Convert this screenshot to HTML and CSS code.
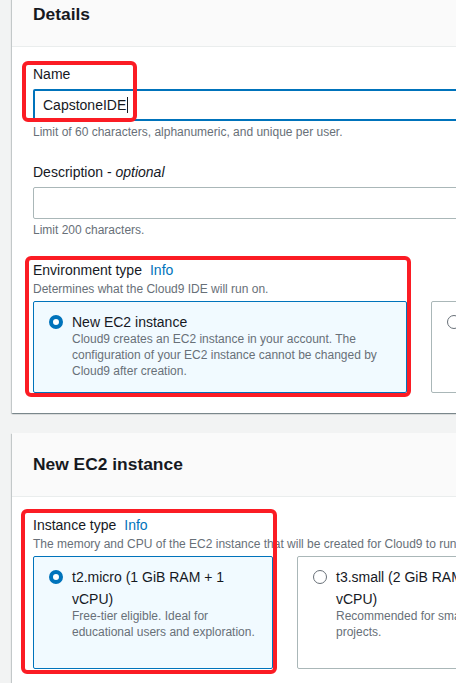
FILE: index.html
```html
<!DOCTYPE html>
<html lang="en">
<head>
<meta charset="utf-8">
<title>Create environment</title>
<link rel="stylesheet" href="styles.css">
</head>
<body>
<div class="page">
  <section class="card card-first">
    <header class="card-header"><h2>Details</h2></header>
    <div class="card-body">
      <div class="field">
        <label class="label">Name</label>
        <div class="input input-focus">CapstoneIDE<span class="caret"></span></div>
        <div class="constraint">Limit of 60 characters, alphanumeric, and unique per user.</div>
        <div class="annot annot-name"></div>
      </div>
      <div class="field">
        <label class="label">Description - <i>optional</i></label>
        <div class="input"></div>
        <div class="constraint">Limit 200 characters.</div>
      </div>
      <div class="field">
        <div class="label">Environment type<a class="info">Info</a></div>
        <div class="field-desc">Determines what the Cloud9 IDE will run on.</div>
        <div class="tiles tiles-env">
          <div class="tile tile-on">
            <span class="radio radio-on"></span>
            <div class="tile-text">
              <div class="tile-title">New EC2 instance</div>
              <div class="tile-desc">Cloud9 creates an EC2 instance in your account. The configuration of your EC2 instance cannot be changed by Cloud9 after creation.</div>
            </div>
          </div>
          <div class="tile">
            <span class="radio"></span>
            <div class="tile-text">
              <div class="tile-title">Existing compute</div>
              <div class="tile-desc">You have an existing instance or server that you'd like to use.</div>
            </div>
          </div>
        </div>
        <div class="annot annot-env"></div>
      </div>
    </div>
  </section>

  <section class="card">
    <header class="card-header"><h2>New EC2 instance</h2></header>
    <div class="card-body card-body-2">
      <div class="field field-first">
        <div class="label">Instance type<a class="info">Info</a></div>
        <div class="field-desc">The memory and CPU of the EC2 instance that will be created for Cloud9 to run on.</div>
        <div class="tiles tiles-inst">
          <div class="tile tile-on">
            <span class="radio radio-on"></span>
            <div class="tile-text">
              <div class="tile-title">t2.micro (1 GiB RAM + 1 vCPU)</div>
              <div class="tile-desc">Free-tier eligible. Ideal for educational users and exploration.</div>
            </div>
          </div>
          <div class="tile">
            <span class="radio"></span>
            <div class="tile-text">
              <div class="tile-title">t3.small (2 GiB RAM + 2 vCPU)</div>
              <div class="tile-desc">Recommended for small web projects.</div>
            </div>
          </div>
        </div>
        <div class="annot annot-inst"></div>
      </div>
    </div>
  </section>
</div>
</body>
</html>
```
FILE: styles.css
```css
html, body {
  overflow: hidden;
}
body {
  margin: 0;
  background: #f2f3f3;
  font-family: "Liberation Sans", Arial, sans-serif;
  color: #16191f;
}
.page {
  padding-left: 12px;
  width: 1000px;
}
.card {
  background: #fff;
  box-shadow: 0 1px 1px 0 rgba(0, 28, 36, .3), 1px 1px 1px 0 rgba(0, 28, 36, .15), -1px 1px 1px 0 rgba(0, 28, 36, .15);
}
.card-first {
  margin-top: -17px;
}
.card + .card {
  margin-top: 20px;
}
.card-header {
  background: #fafafa;
  padding: 20px 21px 21px;
  border-bottom: 1px solid #eaeded;
}
.card-header h2 {
  margin: 0;
  font-size: 17.4px;
  line-height: 22px;
  font-weight: bold;
}
.card-body {
  padding: 16px 21px 20px;
}
.card-body-2 {
  padding-top: 17px;
}
.field {
  position: relative;
  margin-top: 21px;
}
.field:first-child {
  margin-top: 0;
}
.label {
  display: block;
  font-size: 14px;
  line-height: 22px;
  margin-bottom: 4px;
}
.field-desc + .tiles {
  margin-top: 4px;
}
.label + .field-desc {
  margin-top: -4px;
}
.info {
  color: #0073bb;
  margin-left: 8px;
}
.input {
  box-sizing: border-box;
  width: 800px;
  height: 32px;
  border: 1px solid #aab7b8;
  border-radius: 2px;
  padding: 0 9px;
  font-size: 14px;
  line-height: 30px;
  display: flex;
  align-items: center;
}
.input-focus {
  border: 2px solid #0073bb;
  padding: 0 8px;
}
.caret {
  display: inline-block;
  width: 1px;
  height: 16px;
  background: #16191f;
  margin-left: 1px;
}
.constraint {
  margin-top: 3px;
  font-size: 12px;
  line-height: 16px;
  color: #687078;
}
.field-desc {
  font-size: 12px;
  line-height: 16px;
  color: #687078;
}
.tiles {
  display: grid;
  gap: 24px;
}
.tiles-env {
  grid-template-columns: 374px 374px;
}
.tiles-inst {
  grid-template-columns: 240px 240px 240px;
}
.tile {
  box-sizing: border-box;
  border: 1px solid #aab7b8;
  border-radius: 2px;
  padding: 9px 15px 13px;
  display: flex;
  gap: 9px;
  align-items: flex-start;
  background: #fff;
}
.tiles-inst .tile {
  min-height: 113px;
}
.tile-on {
  border-color: #0073bb;
  background: #f1faff;
}
.radio {
  flex: none;
  box-sizing: border-box;
  width: 14px;
  height: 14px;
  margin-top: 4px;
  border-radius: 50%;
  border: 1px solid #687078;
  background: #fff;
}
.radio-on {
  border: 4px solid #0073bb;
}
.tile-title {
  font-size: 14px;
  line-height: 22px;
}
.tile-desc {
  margin-top: -2px;
  font-size: 12px;
  line-height: 16px;
  color: #687078;
}
.annot {
  position: absolute;
  box-sizing: border-box;
  border: 4px solid #fb1c24;
  border-radius: 6px;
  pointer-events: none;
}
.annot-name {
  left: -11px;
  top: -2px;
  width: 115px;
  height: 61px;
}
.annot-env {
  left: -8px;
  top: -3px;
  width: 386px;
  height: 141px;
}
.annot-inst {
  left: -12px;
  top: -5px;
  width: 256px;
  height: 165px;
}
```
